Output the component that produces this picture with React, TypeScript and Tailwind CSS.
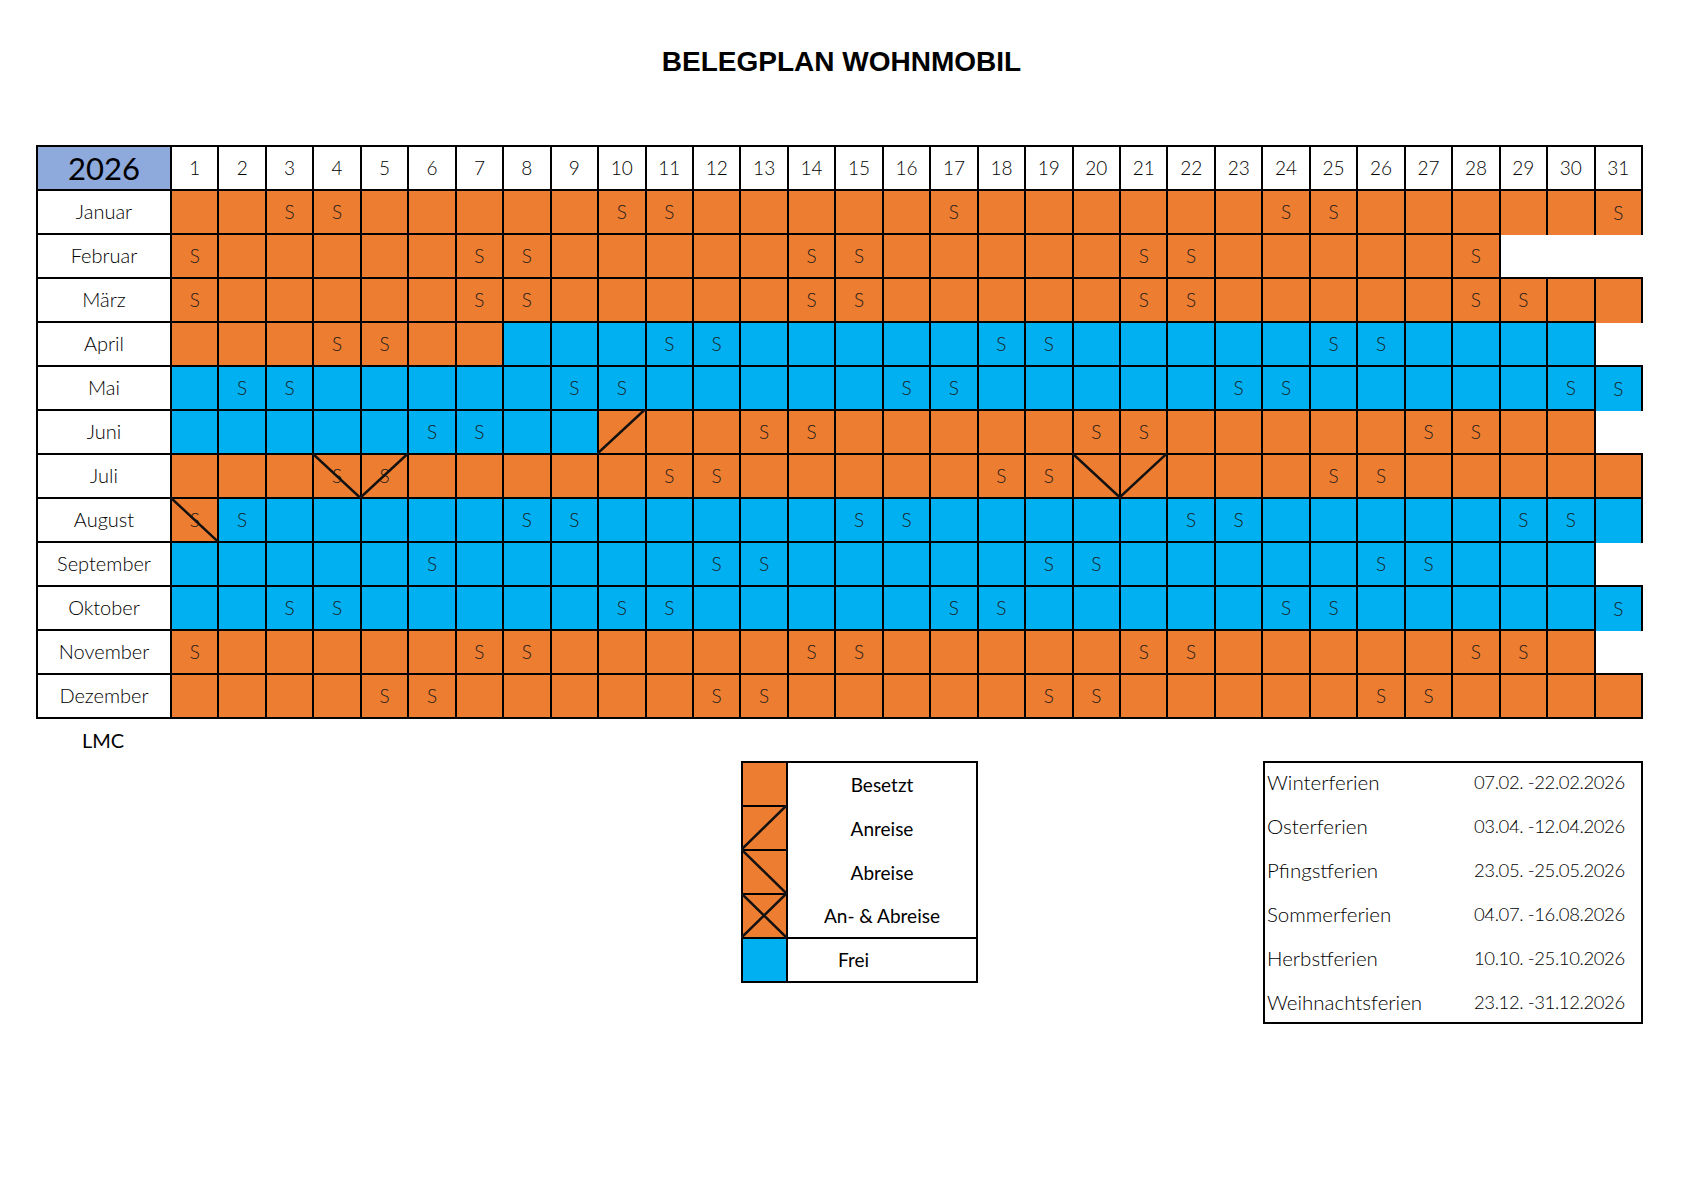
const ORANGE = 'bg-[#ed7d31]'
const BLUE = 'bg-[#00b0f0]'

type Mark = 'an' | 'ab' | 'x'

const months = [
  { name: 'Januar', days: 31, blue: [] as number[][], s: [3, 4, 10, 11, 17, 24, 25, 31] },
  { name: 'Februar', days: 28, blue: [], s: [1, 7, 8, 14, 15, 21, 22, 28] },
  { name: 'März', days: 31, blue: [], s: [1, 7, 8, 14, 15, 21, 22, 28, 29] },
  { name: 'April', days: 30, blue: [[8, 30]], s: [4, 5, 11, 12, 18, 19, 25, 26] },
  { name: 'Mai', days: 31, blue: [[1, 31]], s: [2, 3, 9, 10, 16, 17, 23, 24, 30, 31] },
  { name: 'Juni', days: 30, blue: [[1, 9]], s: [6, 7, 13, 14, 20, 21, 27, 28] },
  { name: 'Juli', days: 31, blue: [], s: [4, 5, 11, 12, 18, 19, 25, 26] },
  { name: 'August', days: 31, blue: [[2, 31]], s: [1, 2, 8, 9, 15, 16, 22, 23, 29, 30] },
  { name: 'September', days: 30, blue: [[1, 30]], s: [6, 12, 13, 19, 20, 26, 27] },
  { name: 'Oktober', days: 31, blue: [[1, 31]], s: [3, 4, 10, 11, 17, 18, 24, 25, 31] },
  { name: 'November', days: 30, blue: [], s: [1, 7, 8, 14, 15, 21, 22, 28, 29] },
  { name: 'Dezember', days: 31, blue: [], s: [5, 6, 12, 13, 19, 20, 26, 27] },
]

// arrivals / departures drawn as diagonals
const marks: Record<string, Mark> = {
  '5-10': 'an',
  '6-4': 'ab',
  '6-5': 'an',
  '6-20': 'ab',
  '6-21': 'an',
  '7-1': 'ab',
}

const holidays = [
  ['Winterferien', '07.02. -22.02.2026'],
  ['Osterferien', '03.04. -12.04.2026'],
  ['Pfingstferien', '23.05. -25.05.2026'],
  ['Sommerferien', '04.07. -16.08.2026'],
  ['Herbstferien', '10.10. -25.10.2026'],
  ['Weihnachtsferien', '23.12. -31.12.2026'],
]

const days = Array.from({ length: 31 }, (_, i) => i + 1)

const Diagonal = ({ mark }: { mark: Mark }) => (
  <svg
    className="absolute -top-[2px] -left-[2px] w-[calc(100%+3px)] h-[calc(100%+3px)] pointer-events-none"
    viewBox="0 0 100 100"
    preserveAspectRatio="none"
  >
    {(mark === 'an' || mark === 'x') && (
      <line x1="0" y1="100" x2="100" y2="0" stroke="#111" strokeWidth="2.5" vectorEffect="non-scaling-stroke" />
    )}
    {(mark === 'ab' || mark === 'x') && (
      <line x1="0" y1="0" x2="100" y2="100" stroke="#111" strokeWidth="2.5" vectorEffect="non-scaling-stroke" />
    )}
  </svg>
)

const isBlue = (m: number, d: number) => months[m].blue.some(([a, b]) => d >= a && d <= b)

const DayCell = ({ m, d }: { m: number; d: number }) => {
  const month = months[m]
  const exists = d <= month.days
  const last = m === months.length - 1
  const belowExists = last || d <= months[m + 1].days
  if (!exists) {
    return <div className={`h-[44px] ${belowExists ? 'border-b-2 border-black' : ''}`} />
  }
  const mark = marks[`${m}-${d}`]
  return (
    <div
      className={`relative h-[44px] border-r-2 border-black ${belowExists ? 'border-b-2' : ''} ${
        isBlue(m, d) ? BLUE : ORANGE
      } flex items-center justify-center text-[19px] font-light text-[#1a1a1a]`}
    >
      {month.s.includes(d) ? 'S' : ''}
      {mark && <Diagonal mark={mark} />}
    </div>
  )
}

export default function App() {
  return (
    <div className="w-[1683px] h-[1190px] bg-white font-['Lato',sans-serif] text-black">
      <div className="h-[124px] flex items-center justify-center">
        <h1 className="font-['Liberation_Sans',Arial,sans-serif] font-bold text-[28px]">BELEGPLAN WOHNMOBIL</h1>
      </div>

      <div className="pt-[21px] pl-[36px]">
        <div className="w-[1607px] grid grid-cols-[134px_repeat(31,minmax(0,1fr))] border-l-2 border-t-2 border-black">
          <div className="h-[44px] bg-[#8ea9db] border-r-2 border-b-2 border-black flex items-center justify-center text-[31px] leading-none">
            2026
          </div>
          {days.map((d) => (
            <div
              key={d}
              className="h-[44px] border-r-2 border-b-2 border-black flex items-center justify-center text-[19px] font-light"
            >
              {d}
            </div>
          ))}

          {months.map((month, m) => (
            <div key={month.name} className="contents">
              <div className="h-[44px] pb-[2px] border-r-2 border-b-2 border-black flex items-center justify-center text-[20px] font-light">
                {month.name}
              </div>
              {days.map((d) => (
                <DayCell key={d} m={m} d={d} />
              ))}
            </div>
          ))}
        </div>

        <div className="w-[134px] h-[42px] flex items-center justify-center text-[20px]">LMC</div>

        <div className="flex items-start">
          <div className="ml-[705px] w-[237px] border-2 border-black">
            {(['besetzt', 'an', 'ab', 'x'] as const).map((k, i) => (
              <div key={k} className="flex h-[44px]">
                <div className={`relative w-[45px] ${ORANGE} border-r-2 border-b-2 border-black`}>
                  {k !== 'besetzt' && <Diagonal mark={k} />}
                </div>
                <div
                  className={`flex-1 flex items-center justify-center text-[19px] ${
                    i === 3 ? 'border-b-2 border-black' : ''
                  }`}
                >
                  {['Besetzt', 'Anreise', 'Abreise', 'An- & Abreise'][i]}
                </div>
              </div>
            ))}
            <div className="flex h-[42px]">
              <div className={`w-[45px] ${BLUE} border-r-2 border-black`} />
              <div className="flex-1 flex items-center pl-[50px] text-[19px]">Frei</div>
            </div>
          </div>

          <div className="ml-[285px] w-[380px] h-[263px] border-2 border-black">
            {holidays.map(([label, range]) => (
              <div key={label} className="h-[44px] pb-[5px] flex items-center font-light">
                <span className="w-[209px] pl-[2px] text-[20.5px]">{label}</span>
                <span className="text-[18.5px] tracking-[-0.4px]">{range}</span>
              </div>
            ))}
          </div>
        </div>
      </div>
    </div>
  )
}
